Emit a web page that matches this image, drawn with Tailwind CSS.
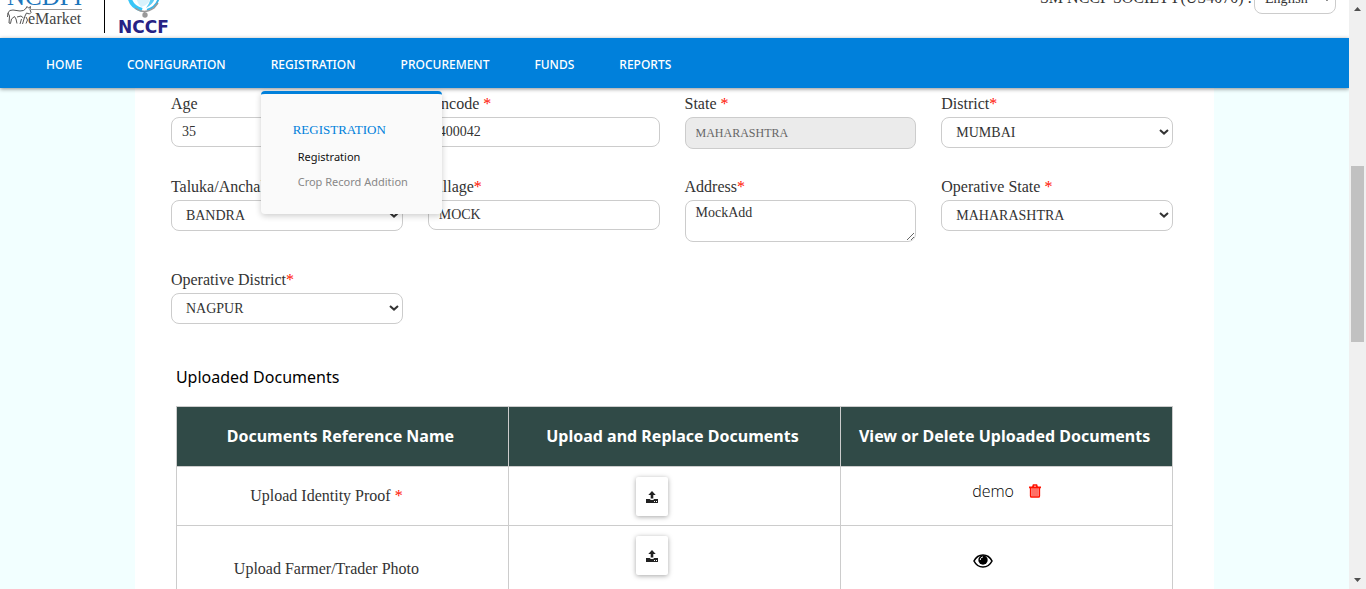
<!DOCTYPE html>
<html lang="en">
<head>
<meta charset="utf-8">
<meta name="viewport" content="width=device-width, initial-scale=1">
<title>Registration</title>
<script src="https://cdn.jsdelivr.net/npm/@tailwindcss/browser@4"></script>
</head>
<body class="flex h-screen overflow-hidden bg-[#f2ffff] font-['Liberation_Serif',serif] text-[#333]">
<svg class="hidden">
  <symbol id="upload" viewBox="0 0 12 12"><path fill="currentColor" d="M6 0 9.700 4H7.300v3.600H4.700V4H2.300zM0 8h3.800c.3.700 1.100 1.100 2.200 1.100S7.900 8.700 8.200 8H12v4H0zm8 2.100v.9h1v-.9zm2 0v.9h1v-.9z"/></symbol>
  <symbol id="down" viewBox="0 0 10 6"><path d="M1 1 5 4.600 9 1" fill="none" stroke="currentColor" stroke-width="2"/></symbol>
</svg>
<div class="flex min-w-0 flex-1 flex-col overflow-hidden">
  <header class="z-20 flex h-[38px] shrink-0 items-end justify-between overflow-hidden bg-white pl-1.5 pr-[13px]">
    <div class="flex items-end pb-[5px]">
      <svg class="h-[60px] w-[78px] overflow-visible" viewBox="0 0 78 60" role="img" aria-label="NCDFI eMarket">
        <text x="1" y="32" font-family="Liberation Serif" font-size="25" fill="#1b75bb">NCDFI</text>
        <path d="M25 36.500H76" stroke="#999" stroke-width="1"/>
        <path d="M1.500 44 2 40Q3 36.500 7 37L14 38Q18 38 19.500 36L21 33.500 22.500 35 24.500 33.500 24 36.500 25 39.500 23.500 41 20.500 40 19 43 18 46 16.500 51M2 40 3.500 43 3 50 4.500 50.500 5.500 46 8.500 43.500 10 46 11 50.500M11 44 15 43 17.500 45M14 51 15.500 46M20 44 21.500 47 20 50.500" fill="none" stroke="#555" stroke-width="1"/>
        <text x="22" y="51" font-family="Liberation Serif" font-size="16" fill="#444">eMarket</text>
      </svg>
      <div class="ml-5 h-[60px] w-px bg-black"></div>
      <svg class="ml-[13px] h-[60px] w-[52px] overflow-visible" viewBox="0 0 52 60" role="img" aria-label="NCCF">
        <path d="M11.500 24Q13 34 24 37" fill="none" stroke="#38c6f8" stroke-width="4"/>
        <path d="M41 24Q39 34 29 37" fill="none" stroke="#38b6e8" stroke-width="2"/>
        <path d="M18 24Q19 30 23 34 28 33 31 29L33 24z" fill="#d8f2fc"/>
        <path d="M37 24Q36 31 28 35 32 30 33 24z" fill="#5ccdf5"/>
        <path d="M17 35Q26 42 36 35L40 30M26.500 38V42" fill="none" stroke="#999" stroke-width="1.500"/>
        <circle cx="27" cy="42" r="2.700" fill="#999"/>
        <text x="0" y="60" font-family="DejaVu Sans" font-weight="bold" font-size="17" fill="#262284">NCCF</text>
      </svg>
    </div>
    <div class="flex items-end pb-6 text-base">
      <span class="pb-1.5 leading-5">SM NCCF SOCIETY(US4070) :</span>
      <span class="relative">
        <select aria-label="Language" class="ml-0.5 h-[31px] w-[82px] appearance-none rounded-lg border border-[#ccc] bg-white pl-2.5 text-sm"><option>English</option></select>
        <svg class="pointer-events-none absolute right-1 top-3 h-1.5 w-2.5"><use href="#down"/></svg>
      </span>
    </div>
  </header>
  <nav class="relative z-20 flex h-[50px] shrink-0 items-center gap-px bg-[#0080db] pl-6 pt-[3px] font-['Noto_Sans',sans-serif] text-xs font-medium text-white shadow-[0_1px_4px_rgba(0,0,0,0.45)]">
    <a href="#" class="px-[22px] py-4">HOME</a>
    <a href="#" class="px-[22px] py-4">CONFIGURATION</a>
    <div class="relative">
      <a href="#" class="block px-[22px] py-4">REGISTRATION</a>
      <div class="absolute left-3 top-[50px] h-[123px] w-[181px] rounded-sm rounded-t border-t-3 border-[#0080db] bg-[#fafafa] pl-8 pt-[26px] font-normal shadow-[0_2px_6px_rgba(0,0,0,0.2)]">
        <h3 class="font-['Liberation_Serif',serif] text-[13px] leading-5 text-[#0080db]">REGISTRATION</h3>
        <a href="#" class="mt-1 block pl-[5px] text-[11px] leading-[25px] text-[#111]">Registration</a>
        <a href="#" class="block pl-[5px] text-[11px] leading-[25px] text-[#888]">Crop Record Addition</a>
      </div>
    </div>
    <a href="#" class="px-[22px] py-4">PROCUREMENT</a>
    <a href="#" class="px-[22px] py-4">FUNDS</a>
    <a href="#" class="px-[22px] py-4">REPORTS</a>
  </nav>
  <main class="mx-auto w-4/5 flex-1 bg-white pl-9 pr-[41px] pt-[5px]">
    <form class="grid grid-cols-4 items-start gap-x-[25px] gap-y-[27px] text-sm">
      <div><label for="age" class="block pb-0.5 text-base leading-[22px]">Age</label><input id="age" value="35" class="block h-[30px] w-full rounded-lg border border-[#ccc] bg-white px-2.5"></div>
      <div><label for="pin" class="block pb-0.5 text-base leading-[22px]">Pincode <span class="text-[#f10]">*</span></label><input id="pin" value="400042" class="block h-[30px] w-full rounded-lg border border-[#ccc] bg-white px-2.5"></div>
      <div><label for="state" class="block pb-0.5 text-base leading-[22px]">State <span class="text-[#f10]">*</span></label><input id="state" disabled value="MAHARASHTRA" class="block h-8 w-full rounded-lg border border-[#ccc] bg-[#ebebeb] px-2.5 text-xs text-[#666]"></div>
      <div><label for="district" class="block pb-0.5 text-base leading-[22px]">District<span class="text-[#f10]">*</span></label>
        <div class="relative"><select id="district" class="block h-[31px] w-full appearance-none rounded-lg border border-[#ccc] bg-white px-3.5"><option>MUMBAI</option></select><svg class="pointer-events-none absolute right-1 top-3 h-1.5 w-2.5"><use href="#down"/></svg></div></div>
      <div><label for="taluka" class="block pb-0.5 text-base leading-[22px]">Taluka/Anchal<span class="text-[#f10]">*</span></label>
        <div class="relative"><select id="taluka" class="block h-[31px] w-full appearance-none rounded-lg border border-[#ccc] bg-white px-3.5"><option>BANDRA</option></select><svg class="pointer-events-none absolute right-1 top-3 h-1.5 w-2.5"><use href="#down"/></svg></div></div>
      <div><label for="village" class="block pb-0.5 text-base leading-[22px]">Village<span class="text-[#f10]">*</span></label><input id="village" value="MOCK" class="block h-[30px] w-full rounded-lg border border-[#ccc] bg-white px-2.5"></div>
      <div><label for="address" class="block pb-0.5 text-base leading-[22px]">Address<span class="text-[#f10]">*</span></label><textarea id="address" class="block h-[42px] w-full resize rounded-lg border border-[#ccc] bg-white px-2.5 py-0.5">MockAdd</textarea></div>
      <div><label for="opstate" class="block pb-0.5 text-base leading-[22px]">Operative State <span class="text-[#f10]">*</span></label>
        <div class="relative"><select id="opstate" class="block h-[31px] w-full appearance-none rounded-lg border border-[#ccc] bg-white px-3.5"><option>MAHARASHTRA</option></select><svg class="pointer-events-none absolute right-1 top-3 h-1.5 w-2.5"><use href="#down"/></svg></div></div>
      <div><label for="opdistrict" class="block pb-0.5 text-base leading-[22px]">Operative District<span class="text-[#f10]">*</span></label>
        <div class="relative"><select id="opdistrict" class="block h-[31px] w-full appearance-none rounded-lg border border-[#ccc] bg-white px-3.5"><option>NAGPUR</option></select><svg class="pointer-events-none absolute right-1 top-3 h-1.5 w-2.5"><use href="#down"/></svg></div></div>
    </form>
    <section class="pl-[5px] pt-[41px]">
      <h2 class="mb-[17px] font-['Noto_Sans',sans-serif] text-base text-black">Uploaded Documents</h2>
      <table class="w-full table-fixed border-collapse text-center text-base">
        <thead>
          <tr class="h-[60px] bg-[#304a47] font-['Noto_Sans',sans-serif] text-base text-white">
            <th class="border border-[#ccc] pb-0.5 pr-1">Documents Reference Name</th>
            <th class="border border-[#ccc] pb-0.5 pr-1">Upload and Replace Documents</th>
            <th class="border border-[#ccc] pb-0.5 pr-1">View or Delete Uploaded Documents</th>
          </tr>
        </thead>
        <tbody>
          <tr class="h-[59px]">
            <td class="border border-[#ccc] pr-8">Upload Identity Proof <span class="text-[#f10]">*</span></td>
            <td class="border border-[#ccc] pr-[45px] align-top"><button type="button" aria-label="Upload identity proof" class="mx-auto mt-2.5 flex h-[39px] w-8 items-center justify-center rounded-xs bg-white text-[#212121] shadow-[0_1px_5px_rgba(0,0,0,0.35)]"><svg class="size-3"><use href="#upload"/></svg></button></td>
            <td class="border border-[#ccc] align-top">
              <div class="flex items-center justify-center gap-[15px] pt-3 font-['Open_Sans',sans-serif]"><span class="font-light text-black">demo</span>
              <button type="button" aria-label="Delete" class="text-[#f10]"><svg class="h-3.5 w-3" viewBox="0 0 12 14" fill="none" stroke="currentColor"><path d="M0 3.300h12M1.700 3v9q0 1 .8 1h7q.8 0 .8-1V3M3.800 3 4.500 1h3L8.200 3" stroke-width="1.700"/><path d="M4 4v8.500M6 4v8.500M8 4v8.500" stroke-width="1.200"/></svg></button></div>
            </td>
          </tr>
          <tr class="h-[88px]">
            <td class="border border-[#ccc] pr-8 pb-0.5">Upload Farmer/Trader Photo</td>
            <td class="border border-[#ccc] pr-[45px] align-top"><button type="button" aria-label="Upload photo" class="mx-auto mt-2.5 flex h-[39px] w-8 items-center justify-center rounded-xs bg-white text-[#212121] shadow-[0_1px_5px_rgba(0,0,0,0.35)]"><svg class="size-3"><use href="#upload"/></svg></button></td>
            <td class="border border-[#ccc] pr-[47px] align-top"><button type="button" aria-label="View photo" class="mt-7 text-black"><svg class="h-3.5 w-5" viewBox="0 0 20 14"><path d="M1 7C3 3 6.500 1 10 1s7 2 9 6c-2 4-5.500 6-9 6S3 11 1 7z" fill="none" stroke="currentColor" stroke-width="1.600"/><circle cx="10" cy="6" r="4.700" fill="currentColor"/><path d="M7.300 6C7.300 4.200 8.500 3 10 3" fill="none" stroke="#fff" stroke-width="1"/></svg></button></td>
          </tr>
        </tbody>
      </table>
    </section>
  </main>
</div>
<div class="flex w-[17px] shrink-0 flex-col items-center bg-[#f0f0f0] text-[#505050]" aria-hidden="true">
  <svg class="mt-[7px] h-1 w-[7px]" viewBox="0 0 7 4"><path d="M0 4 3.500 0 7 4z" fill="currentColor"/></svg>
  <div class="mt-[155px] h-44 w-[13px] bg-[#c1c1c1]"></div>
  <svg class="mb-[7px] mt-auto h-1 w-[7px]" viewBox="0 0 7 4"><path d="M0 0 3.500 4 7 0z" fill="currentColor"/></svg>
</div>
</body>
</html>
